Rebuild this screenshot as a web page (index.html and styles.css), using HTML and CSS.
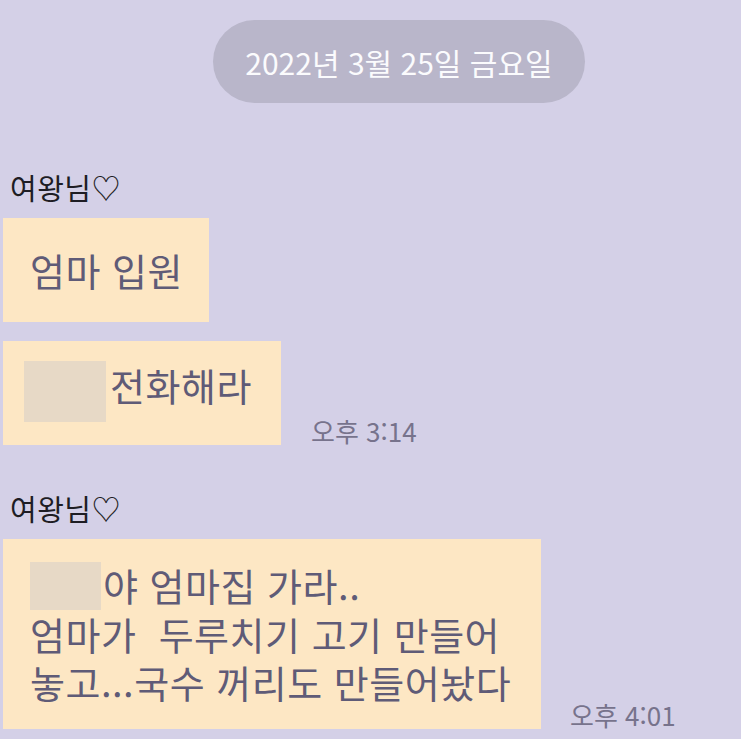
FILE: index.html
```html
<!DOCTYPE html>
<html lang="ko">
<head>
<meta charset="utf-8">
<link rel="stylesheet" href="styles.css">
</head>
<body>
<div class="chat">
  <div class="date-row"><div class="date-pill">2022년 3월 25일 금요일</div></div>

  <div class="group g1">
    <div class="name">여왕님♡</div>
    <div class="row"><div class="bubble b1">엄마 입원</div></div>
    <div class="row"><div class="bubble b2"><span class="blur blur1"></span>전화해라</div><span class="time t1">오후 3:14</span></div>
  </div>

  <div class="group g2">
    <div class="name">여왕님♡</div>
    <div class="row"><div class="bubble b3"><span class="blur blur2"></span>야 엄마집 가라..<br>엄마가&nbsp; 두루치기 고기 만들어<br>놓고...국수 꺼리도 만들어놨다</div><span class="time t2">오후 4:01</span></div>
  </div>
</div>
</body>
</html>
```

FILE: styles.css
```css
html, body {
  margin: 0;
  padding: 0;
  background: #d4d0e7;
  width: 741px;
  height: 739px;
  overflow: hidden;
  font-family: "Noto Sans CJK KR", "Noto Sans", sans-serif;
}
.chat {
  display: flex;
  flex-direction: column;
  padding-top: 20px;
}
.date-row {
  display: flex;
  padding-left: 213px;
}
.date-pill {
  width: 372px;
  height: 83px;
  border-radius: 42px;
  background: #b9b6ca;
  color: #fbfbfd;
  font-size: 30px;
  display: flex;
  align-items: center;
  justify-content: center;
}
.group {
  display: flex;
  flex-direction: column;
  padding-left: 3px;
}
.g1 { margin-top: 66px; }
.g2 { margin-top: 26px; }
.name {
  font-size: 29px;
  letter-spacing: 0.5px;
  color: #1e1d24;
  line-height: 36px;
  padding-left: 7px;
  margin-bottom: 13px;
}
.row {
  display: flex;
  align-items: flex-end;
  margin-bottom: 19px;
}
.bubble {
  background: #fde7c4;
  color: #5f5b77;
  font-size: 38px;
  letter-spacing: 0.5px;
  line-height: 48px;
  box-sizing: border-box;
}
.b1 { width: 206px; height: 104px; padding: 28px 0 0 27px; }
.b2 { width: 278px; height: 104px; padding: 20px 0 0 21px; display: flex; align-items: flex-start; }
.b3 { width: 538px; height: 190px; padding: 22px 0 0 27px; }
.blur {
  display: inline-block;
  background: #e7d9c6;
}
.blur1 { width: 82px; height: 61px; margin-right: 4px; }
.blur2 { width: 71px; height: 48px; margin-right: 2px; vertical-align: -9px; }
.time {
  font-size: 26px;
  color: #77738c;
  line-height: 28px;
}
.t1 { margin-left: 30px; }
.t2 { margin-left: 29px; }
```
